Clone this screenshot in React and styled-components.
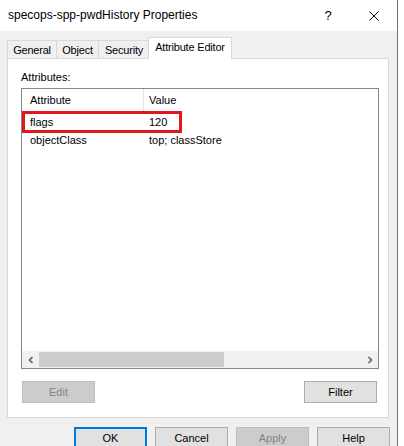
import React from 'react';
import styled, { createGlobalStyle } from 'styled-components';

const GlobalStyle = createGlobalStyle`
  body {
    margin: 0;
    background: #fff;
    font-family: "Liberation Sans", Arial, sans-serif;
  }
`;

const Window = styled.div`
  width: 397px;
  height: 446px;
  border-right: 1px solid #727272;
  display: flex;
  flex-direction: column;
  overflow: hidden;
  background: #f0f0f0;
`;

const TitleBar = styled.div`
  height: 31px;
  flex: none;
  background: #fff;
  display: flex;
  align-items: center;
  padding-left: 8px;
`;

const Title = styled.div`
  flex: 1;
  font-size: 12px;
  color: #000;
  margin-top: -1px;
`;

const TitleButton = styled.div`
  width: 46px;
  height: 31px;
  display: flex;
  align-items: center;
  justify-content: center;
  font-size: 13px;
  color: #000;
`;

const Body = styled.div`
  flex: 1;
  padding: 6px 8px 0 7px;
  display: flex;
  flex-direction: column;
`;

const TabRow = styled.div`
  display: flex;
  align-items: flex-end;
  height: 22px;
  position: relative;
  z-index: 1;
  margin-bottom: -1px;
`;

const Tab = styled.div`
  width: ${p => p.$width}px;
  height: ${p => (p.$active ? '22px' : '19px')};
  box-sizing: border-box;
  margin: 0 ${p => (p.$active ? '-2px' : '0')};
  border: 1px solid #d9d9d9;
  border-bottom: ${p => (p.$active ? 'none' : '1px solid #d9d9d9')};
  border-left: ${p => (p.$first || p.$active ? '1px solid #d9d9d9' : 'none')};
  background: ${p => (p.$active ? '#fff' : '#f0f0f0')};
  font-size: 11px;
  letter-spacing: -0.2px;
  white-space: nowrap;
  display: flex;
  align-items: center;
  justify-content: center;
  padding-bottom: ${p => (p.$active ? '3px' : '0')};
  position: relative;
  z-index: ${p => (p.$active ? 2 : 1)};
`;

const Panel = styled.div`
  background: #fff;
  border: 1px solid #d9d9d9;
  height: 360px;
  box-sizing: border-box;
  padding: 12px 0 0 13px;
  display: flex;
  flex-direction: column;
`;

const Label = styled.div`
  font-size: 11px;
  height: 17px;
`;

const ListBox = styled.div`
  width: 358px;
  height: 281px;
  box-sizing: border-box;
  border: 1px solid #828790;
  display: flex;
  flex-direction: column;
`;

const HeaderRow = styled.div`
  height: 22px;
  display: flex;
  flex: none;
`;

const HeaderCell = styled.div`
  width: ${p => p.$width}px;
  box-sizing: border-box;
  padding-left: ${p => p.$pad}px;
  border-right: ${p => (p.$divider ? '1px solid #e5e5e5' : 'none')};
  font-size: 11px;
  display: flex;
  align-items: center;
  padding-bottom: 1px;
`;

const Rows = styled.div`
  flex: 1;
  position: relative;
  padding-top: 2px;
`;

const Row = styled.div`
  height: 18px;
  display: flex;
  align-items: center;
  font-size: 11px;
`;

const Cell = styled.div`
  width: ${p => p.$width}px;
  box-sizing: border-box;
  padding-left: ${p => p.$pad}px;
`;

const Mark = styled.div`
  position: absolute;
  left: 0;
  top: 0;
  width: 160px;
  height: 22px;
  box-sizing: border-box;
  border: 3px solid #e3161b;
`;

const HScroll = styled.div`
  height: 17px;
  flex: none;
  background: #f0f0f0;
  display: flex;
  align-items: center;
`;

const Arrow = styled.div`
  width: 17px;
  height: 17px;
  display: flex;
  align-items: center;
  justify-content: center;
`;

const Track = styled.div`
  flex: 1;
  height: 17px;
  display: flex;
  align-items: center;
`;

const Thumb = styled.div`
  height: 15px;
  background: #cdcdcd;
`;

const ButtonRow = styled.div`
  display: flex;
  justify-content: space-between;
  width: 355px;
  margin-left: 1px;
  margin-top: 12px;
`;

const Button = styled.div`
  width: 73px;
  height: 22px;
  box-sizing: border-box;
  display: flex;
  align-items: center;
  justify-content: center;
  font-size: 11px;
  background: ${p => (p.$disabled ? '#cccccc' : '#e1e1e1')};
  color: ${p => (p.$disabled ? '#838383' : '#000')};
  border: ${p => (p.$default ? '2px solid #0078d7' : p.$disabled ? '1px solid #bfbfbf' : '1px solid #adadad')};
`;

const Footer = styled.div`
  display: flex;
  justify-content: flex-end;
  gap: 8px;
  padding: 9px 0 0 0;
  margin-right: -1px;
`;

const Chevron = ({ dir }) => (
  <svg width="8" height="8" viewBox="0 0 8 8">
    <path
      d={dir === 'left' ? 'M5.5 1 L2.5 4 L5.5 7' : 'M2.5 1 L5.5 4 L2.5 7'}
      fill="none"
      stroke="#606060"
      strokeWidth="1.6"
    />
  </svg>
);

const CloseIcon = () => (
  <svg width="10" height="10" viewBox="0 0 10 10">
    <path d="M0.5 0.5 L9.5 9.5 M9.5 0.5 L0.5 9.5" stroke="#000" strokeWidth="1" />
  </svg>
);

const tabs = [
  { name: 'General', width: 50 },
  { name: 'Object', width: 42 },
  { name: 'Security', width: 51 },
  { name: 'Attribute Editor', width: 84 },
];

const rows = [
  { name: 'flags', value: '120' },
  { name: 'objectClass', value: 'top; classStore' },
];

const App = () => {
  return (
    <React.Fragment>
      <GlobalStyle />
      <Window>
        <TitleBar>
          <Title>specops-spp-pwdHistory Properties</Title>
          <TitleButton>?</TitleButton>
          <TitleButton><CloseIcon /></TitleButton>
        </TitleBar>
        <Body>
          <TabRow>
            {tabs.map((t, i) => (
              <Tab key={t.name} $width={t.width} $first={i === 0} $active={i === tabs.length - 1}>
                {t.name}
              </Tab>
            ))}
          </TabRow>
          <Panel>
            <Label>Attributes:</Label>
            <ListBox>
              <HeaderRow>
                <HeaderCell $width={122} $pad={8} $divider>Attribute</HeaderCell>
                <HeaderCell $width={200} $pad={5}>Value</HeaderCell>
              </HeaderRow>
              <Rows>
                {rows.map(r => (
                  <Row key={r.name}>
                    <Cell $width={127} $pad={8}>{r.name}</Cell>
                    <Cell $width={200} $pad={0}>{r.value}</Cell>
                  </Row>
                ))}
                <Mark />
              </Rows>
              <HScroll>
                <Arrow><Chevron dir="left" /></Arrow>
                <Track>
                  <Thumb style={{ width: '185px' }} />
                </Track>
                <Arrow><Chevron dir="right" /></Arrow>
              </HScroll>
            </ListBox>
            <ButtonRow>
              <Button $disabled>Edit</Button>
              <Button>Filter</Button>
            </ButtonRow>
          </Panel>
          <Footer>
            <Button $default>OK</Button>
            <Button>Cancel</Button>
            <Button $disabled>Apply</Button>
            <Button>Help</Button>
          </Footer>
        </Body>
      </Window>
    </React.Fragment>
  );
};

export default App;
